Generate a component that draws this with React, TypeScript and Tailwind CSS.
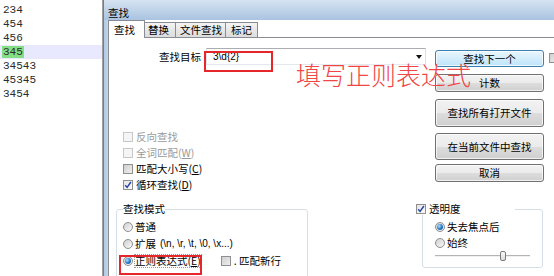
import React from "react";

const UI = "font-['Noto_Sans_CJK_SC','Noto_Sans',sans-serif]";

function Check({ checked = false, disabled = false }: { checked?: boolean; disabled?: boolean }) {
  const cls = disabled
    ? "border-[#c8c8c8] bg-[#f5f5f5]"
    : checked
    ? "border-[#8e8f8f] bg-gradient-to-br from-[#e4e4e4] to-[#fbfbfb]"
    : "border-[#8e8f8f] bg-gradient-to-br from-[#cfcfcf] to-[#efefef]";
  return (
    <span className={`w-[10px] h-[10px] shrink-0 flex items-center justify-center border ${cls}`}>
      {checked && (
        <svg width="8" height="8" viewBox="0 0 8 8">
          <path d="M1.2 4.2 L3.1 6.4 L6.9 1" fill="none" stroke="#2a46a6" strokeWidth="1.5" />
        </svg>
      )}
    </span>
  );
}

function Radio({ on = false }: { on?: boolean }) {
  return (
    <span className="w-[10px] h-[10px] shrink-0 rounded-full border border-[#8e8f8f] bg-gradient-to-br from-[#cfcfcf] to-[#fafafa] flex items-center justify-center">
      {on && (
        <span className="w-[6px] h-[6px] rounded-full bg-[radial-gradient(circle_at_35%_35%,#b5e2ff,#2b7fd0_50%,#0c3f80)]" />
      )}
    </span>
  );
}

function Btn({ children, h, mt, def = false }: { children: React.ReactNode; h: string; mt: string; def?: boolean }) {
  const skin = def
    ? "border-[#3c7fb1] bg-gradient-to-b from-[#eaf6fd] to-[#bde4fa]"
    : "border-[#707070] bg-[linear-gradient(#f2f2f2_0%,#ebebeb_50%,#dddddd_51%,#cfcfcf_100%)]";
  return (
    <div
      className={`w-[109px] ${h} ${mt} rounded-[3px] border ${skin} shadow-[inset_0_0_0_1px_rgba(255,255,255,0.7)] flex items-center justify-center text-[10.5px] leading-[12px] text-black`}
    >
      {children}
    </div>
  );
}

export default function App() {
  const lines = ["234", "454", "456", "345", "34543", "45345", "3454"];
  return (
    <div className={`relative w-[554px] h-[276px] overflow-hidden bg-white flex ${UI}`}>
      {/* editor */}
      <div className="w-[103px] shrink-0 border-r border-[#a0a0a0] pt-[3px] font-['Liberation_Mono',monospace] text-[11px] leading-[14px] text-[#2b2b2b]">
        {lines.map((l, i) =>
          i === 3 ? (
            <div key={i} className="h-[14px] bg-[#e8e8ff] pl-[2px]">
              <span className="bg-[#84de84] pl-[1px] pr-[1px]">{l}</span>
            </div>
          ) : (
            <div key={i} className="h-[14px] pl-[3px]">
              {l}
            </div>
          )
        )}
      </div>

      {/* dialog */}
      <div className="flex-1 flex flex-col">
        <div className="h-[3px] bg-gradient-to-b from-[#bfc5cc] to-[#e3eaf2]" />
        <div className="h-[22px] bg-gradient-to-b from-[#d6e3f1] to-[#a9c3e0] border-l border-[#6e7f93] pl-[4px] pt-[6px] text-[10.5px] leading-[14px] text-black">
          查找
        </div>
        <div className="flex-1 flex">
          <div className="w-[5px] border-l border-[#6e7f93] bg-gradient-to-r from-[#b2c9e3] to-[#c3d6ea]" />
          <div className="flex-1 flex flex-col bg-white">
            {/* tabs */}
            <div className="h-[17px] flex items-end text-[10.5px] leading-[12px] text-black">
              <div className="relative z-10 w-[37px] h-[18px] -mb-px border border-b-0 border-[#898c95] bg-white flex items-center pl-[5px]">
                查找
              </div>
              <div className="-ml-px w-[32px] h-[15px] border border-b-0 border-[#898c95] bg-gradient-to-b from-[#f3f3f3] to-[#dcdcdc] flex items-center pl-[3px]">
                替换
              </div>
              <div className="-ml-px w-[51px] h-[15px] border border-b-0 border-[#898c95] bg-gradient-to-b from-[#f3f3f3] to-[#dcdcdc] flex items-center pl-[4px]">
                文件查找
              </div>
              <div className="-ml-px w-[33px] h-[15px] border border-b-0 border-[#898c95] bg-gradient-to-b from-[#f3f3f3] to-[#dcdcdc] flex items-center pl-[5px]">
                标记
              </div>
            </div>

            {/* panel */}
            <div className="flex-1 border-t border-l border-[#898c95] flex flex-col text-[10.5px] leading-[12px] text-black">
              <div className="flex">
                {/* left column */}
                <div className="w-[326px] shrink-0 pt-[10px]">
                  <div className="flex items-center h-[17px]">
                    <div className="w-[97px] pl-[50px] whitespace-nowrap">查找目标 :</div>
                    <div className="w-[220px] h-[17px] border border-[#abadb3] border-l-[#e2e3ea] border-r-[#dbdfe6] border-b-[#e3e9ef] bg-white flex items-center pl-[6px] text-[10px] leading-[12px] font-['Liberation_Sans',sans-serif]">
                      3\d{"{"}2{"}"}
                      <svg className="ml-auto mr-[3px]" width="6" height="4" viewBox="0 0 6 4">
                        <path d="M0 0 H6 L3 4 Z" fill="#111" />
                      </svg>
                    </div>
                  </div>
                  <div className="mt-[64px] pl-[14px]">
                    <div className="flex items-center h-[16px] gap-[3px] text-[#9a9a9a]">
                      <Check disabled />
                      <span>反向查找</span>
                    </div>
                    <div className="flex items-center h-[16px] gap-[3px] text-[#9a9a9a]">
                      <Check disabled />
                      <span>
                        全词匹配(<span className="underline">W</span>)
                      </span>
                    </div>
                    <div className="flex items-center h-[16px] gap-[3px]">
                      <Check />
                      <span>
                        匹配大小写(<span className="underline">C</span>)
                      </span>
                    </div>
                    <div className="flex items-center h-[16px] gap-[3px]">
                      <Check checked />
                      <span>
                        循环查找(<span className="underline">D</span>)
                      </span>
                    </div>
                  </div>
                </div>

                {/* buttons */}
                <div className="w-[109px] shrink-0 pt-[12px] flex flex-col">
                  <Btn h="h-[17px]" mt="mt-0" def>
                    查找下一个
                  </Btn>
                  <Btn h="h-[18px]" mt="mt-[7px]">
                    计数
                  </Btn>
                  <Btn h="h-[28px]" mt="mt-[7px]">
                    查找所有打开文件
                  </Btn>
                  <Btn h="h-[27px]" mt="mt-[6px]">
                    在当前文件中查找
                  </Btn>
                  <Btn h="h-[18px]" mt="mt-[4px]">
                    取消
                  </Btn>
                </div>
                <div className="ml-[5px] mt-[15px]">
                  <Check />
                </div>
              </div>

              {/* bottom groups */}
              <div className="flex items-start mt-[10px]">
                <fieldset className="ml-[7px] w-[192px] h-[80px] shrink-0 border border-[#d5dfe5] rounded-[3px] px-[6px]">
                  <legend className="p-0 leading-[12px]">查找模式</legend>
                  <div className="mt-[3px]">
                    <div className="flex items-center h-[17px] gap-[2px]">
                      <Radio />
                      <span>普通</span>
                    </div>
                    <div className="flex items-center h-[17px] gap-[2px]">
                      <Radio />
                      <span>扩展</span>
                      <span className="ml-[2px] font-['Liberation_Sans',sans-serif] text-[10px] whitespace-nowrap">
                        (\n, \r, \t, \0, \x...)
                      </span>
                    </div>
                    <div className="flex items-center h-[17px] gap-[2px]">
                      <Radio on />
                      <span className="outline-1 outline-dotted outline-[#9a9a9a] whitespace-nowrap">
                        正则表达式(<span className="underline">E</span>)
                      </span>
                      <span className="ml-[18px]">
                        <Check />
                      </span>
                      <span className="ml-[1px] whitespace-nowrap">. 匹配新行</span>
                    </div>
                  </div>
                </fieldset>

                <fieldset className="ml-[114px] w-[121px] h-[65px] shrink-0 border border-[#d5dfe5] rounded-[3px] p-0">
                  <legend className="p-0 -ml-[7px] leading-[12px]">
                    <span className="w-[99px] bg-white flex items-center gap-[3px]">
                      <Check checked />
                      <span>透明度</span>
                    </span>
                  </legend>
                  <div className="pl-[12px] mt-[4px]">
                    <div className="flex items-center h-[16px] gap-[2px]">
                      <Radio on />
                      <span>失去焦点后</span>
                    </div>
                    <div className="flex items-center h-[16px] gap-[2px]">
                      <Radio />
                      <span>始终</span>
                    </div>
                    <div className="relative w-[95px] h-[10px] flex items-center">
                      <div className="w-full h-[2px] border-t border-[#b4b4b4] border-b border-b-[#f0f0f0]" />
                      <div className="absolute left-[65px] top-0 w-[6px] h-[10px] rounded-[2px] border border-[#7a7a7a] bg-gradient-to-b from-[#fbfbfb] to-[#dcdcdc]" />
                    </div>
                  </div>
                </fieldset>
              </div>
            </div>
          </div>
        </div>
      </div>

      {/* annotations */}
      <div className="absolute left-[204px] top-[51px] w-[69px] h-[21px] border-2 border-[#e5262b]" />
      <div className="absolute left-[119px] top-[255px] w-[83px] h-[20px] border-2 border-[#e5262b]" />
      <div className="absolute left-[296px] top-[62px] text-[25px] leading-[25px] font-light text-[#f04646] whitespace-nowrap">
        填写正则表达式
      </div>
    </div>
  );
}
